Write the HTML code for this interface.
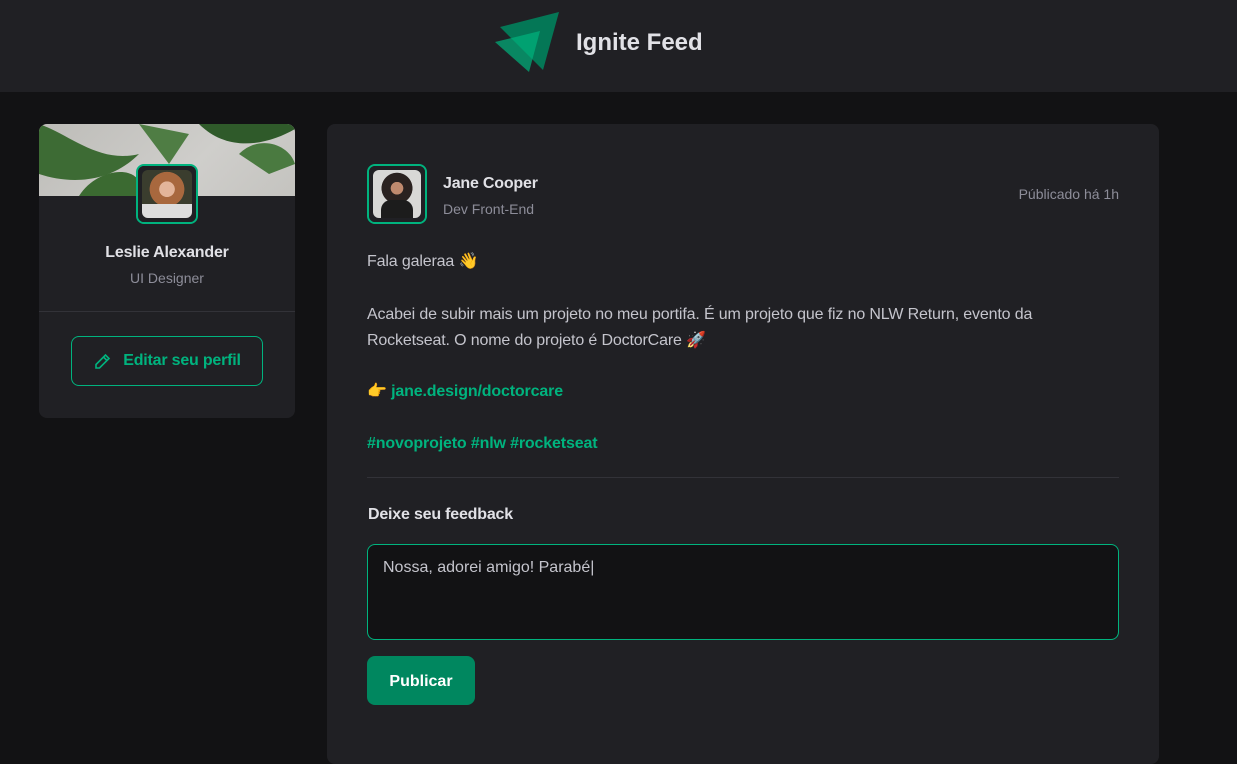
<!DOCTYPE html>
<html><head><meta charset="utf-8">
<style>
*{box-sizing:border-box;margin:0;padding:0}
body{width:1237px;height:744px;overflow:hidden;background:#121214;font-family:"Liberation Sans",sans-serif;color:#e1e1e6}
header{height:92px;background:#202024;position:relative}
header .t{position:absolute;left:576px;top:29px;font-size:24px;font-weight:bold;color:#e1e1e6}
.side{position:absolute;left:39px;top:124px;width:256px;height:294px;background:#202024;border-radius:8px;overflow:hidden}
.cover{height:72px;background:linear-gradient(135deg,#bdbcb8,#cfcecb 60%,#c4c3bf)}
.av{position:absolute;border:2px solid #00b37e;outline:4px solid #202024;outline-offset:-6px;border-radius:8px;overflow:hidden;background:#202024}
.av .i{position:absolute;inset:4px;border-radius:6px;overflow:hidden}
.side .name{position:absolute;top:120px;width:100%;text-align:center;font-weight:bold;font-size:16px;letter-spacing:-0.2px}
.side .role{position:absolute;top:146px;width:100%;text-align:center;font-size:14px;color:#8d8d99}
.side hr{position:absolute;top:187px;left:0;width:100%;border:0;border-top:1px solid #323238}
.btn{position:absolute;left:32px;top:212px;width:192px;height:50px;border:1px solid #00b37e;border-radius:8px;color:#00b37e;font-weight:bold;font-size:16px;display:flex;align-items:center;justify-content:center;gap:10px;letter-spacing:-0.2px}
.post{position:absolute;left:327px;top:124px;width:832px;height:640px;background:#202024;border-radius:8px}
.p{position:absolute;left:40px;font-size:16px;color:#c4c4cc;line-height:26px;letter-spacing:-0.15px}
.g{color:#00b37e;font-weight:bold}
</style></head><body>
<header>
<svg width="1237" height="92" style="position:absolute;left:0;top:0">
<polygon points="500,27 559,12 543,70" fill="#00875f" opacity="0.85"/>
<polygon points="495,42 540,31 529,72" fill="#00b37e" opacity="0.7"/>
</svg>
<div class="t">Ignite Feed</div>
</header>
<div class="side">
<div class="cover">
<svg width="256" height="72"><path d="M0,0 C30,10 60,40 100,30 C70,60 30,60 0,50Z" fill="#3d6b34"/><path d="M100,0 L130,40 L150,10Z" fill="#4f7d44"/><path d="M160,0 C190,30 230,20 256,5 L256,0Z" fill="#2f5a2a"/><path d="M40,72 C60,40 110,40 100,72Z" fill="#3b6a31"/><path d="M200,30 C220,10 250,20 256,40 L230,50Z" fill="#4a7a40"/></svg>
</div>
<div class="av" style="left:97px;top:40px;width:62px;height:60px"><div class="i" style="background:radial-gradient(circle at 50% 40%,#e3b59a 0 20%,#a8683e 21% 45%,#3a3d2e 46%)"><div style="position:absolute;bottom:0;left:0;right:0;height:14px;background:#ddd"></div></div></div>
<div class="name">Leslie Alexander</div>
<div class="role">UI Designer</div>
<hr>
<div class="btn"><svg width="20" height="20" viewBox="0 0 20 20" fill="none" stroke="#00b37e" stroke-width="1.6"><path d="M3 17h3.5L16 7.5 12.5 4 3 13.5z M10.5 6l3.5 3.5"/></svg>Editar seu perfil</div>
</div>
<div class="post">
<div class="av" style="left:40px;top:40px;width:60px;height:60px"><div class="i" style="background:radial-gradient(circle at 50% 38%,#c08a6e 0 16%,#2a2220 17% 40%,#d8d8d6 41%)"><div style="position:absolute;bottom:0;left:8px;right:8px;height:18px;background:#1c1c1c;border-radius:10px 10px 0 0"></div></div></div>
<div style="position:absolute;left:116px;top:51px;font-weight:bold;font-size:16px;color:#e1e1e6;letter-spacing:-0.2px">Jane Cooper</div>
<div style="position:absolute;left:116px;top:77px;font-size:14px;color:#8d8d99">Dev Front-End</div>
<div style="position:absolute;right:40px;top:62px;font-size:14px;color:#8d8d99">Públicado há 1h</div>
<div class="p" style="top:125px">Fala galeraa 👋</div>
<div class="p" style="top:178px">Acabei de subir mais um projeto no meu portifa. É um projeto que fiz no NLW Return, evento da<br>Rocketseat. O nome do projeto é DoctorCare 🚀</div>
<div class="p" style="top:255px">👉 <span class="g">jane.design/doctorcare</span></div>
<div class="p g" style="top:307px">#novoprojeto #nlw #rocketseat</div>
<div style="position:absolute;left:40px;right:40px;top:353px;border-top:1px solid #323238"></div>
<div style="position:absolute;left:41px;top:382px;font-weight:bold;font-size:16px;color:#e1e1e6;letter-spacing:-0.2px">Deixe seu feedback</div>
<div style="position:absolute;left:40px;top:420px;width:752px;height:96px;background:#121214;border:1px solid #00b37e;border-radius:8px;padding:13px 15px;font-size:16px;line-height:20px;color:#c4c4cc">Nossa, adorei amigo! Parabé|</div>
<div style="position:absolute;left:40px;top:532px;width:108px;height:49px;background:#00875f;border-radius:8px;color:#fff;font-weight:bold;font-size:16px;display:flex;align-items:center;justify-content:center;padding-top:2px">Publicar</div>
</div>
</body></html>
